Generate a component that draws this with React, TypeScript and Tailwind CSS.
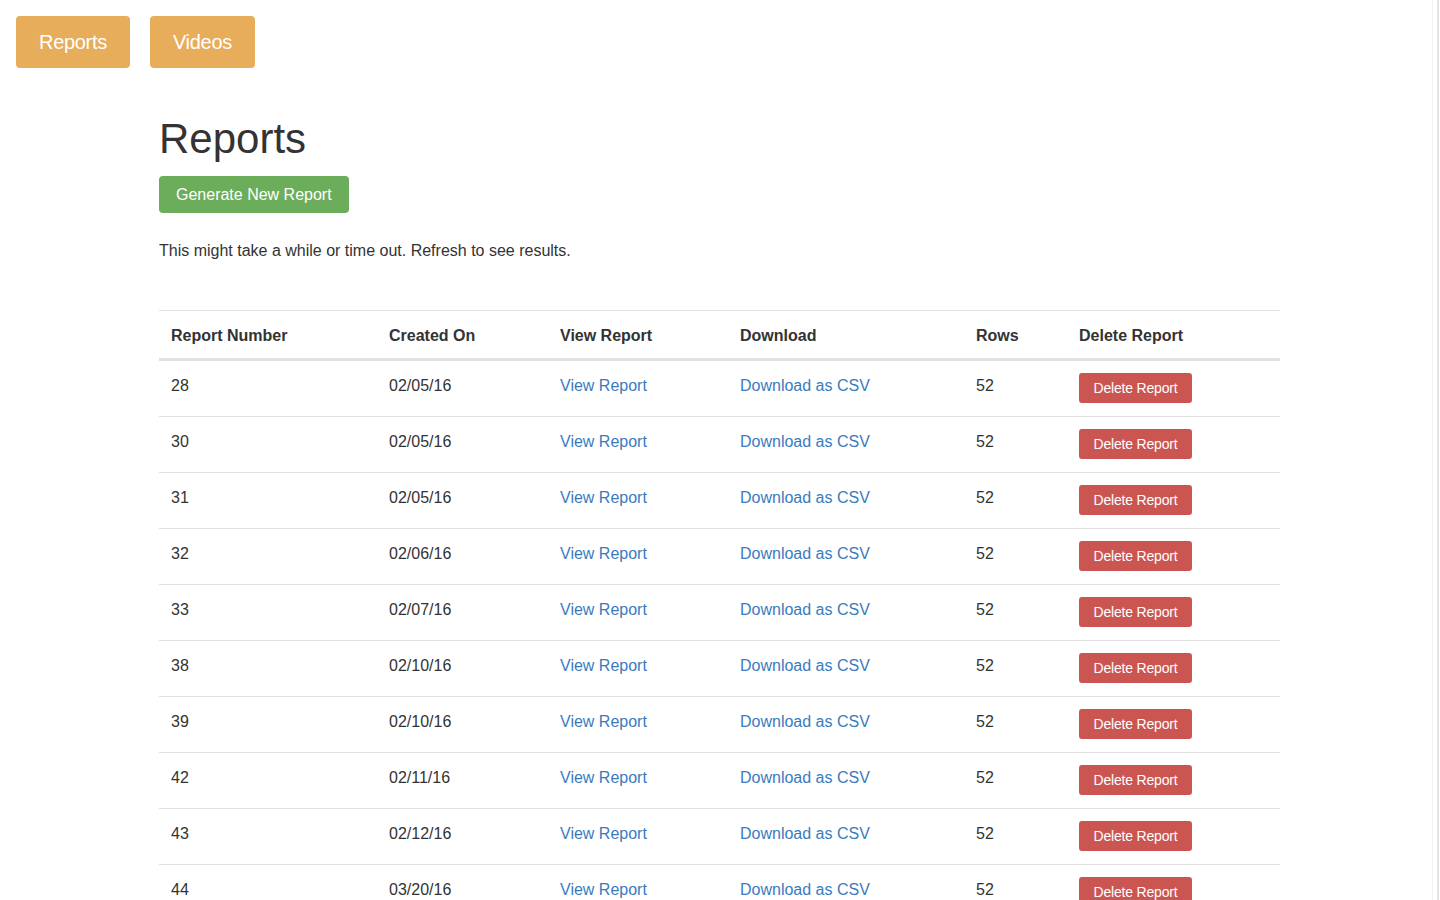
import React from "react";

type Report = {
  id: number;
  created: string;
  rows: number;
};

const reports: Report[] = [
  { id: 28, created: "02/05/16", rows: 52 },
  { id: 30, created: "02/05/16", rows: 52 },
  { id: 31, created: "02/05/16", rows: 52 },
  { id: 32, created: "02/06/16", rows: 52 },
  { id: 33, created: "02/07/16", rows: 52 },
  { id: 38, created: "02/10/16", rows: 52 },
  { id: 39, created: "02/10/16", rows: 52 },
  { id: 42, created: "02/11/16", rows: 52 },
  { id: 43, created: "02/12/16", rows: 52 },
  { id: 44, created: "03/20/16", rows: 52 },
];

const headers = [
  { label: "Report Number", w: "w-[218px]" },
  { label: "Created On", w: "w-[171px]" },
  { label: "View Report", w: "w-[180px]" },
  { label: "Download", w: "w-[236px]" },
  { label: "Rows", w: "w-[103px]" },
  { label: "Delete Report", w: "w-[213px]" },
];

function NavButton({ label }: { label: string }) {
  return (
    <button className="h-[52px] px-[23px] rounded-[4px] bg-[#e8ad5b] text-white text-[20px] leading-[24px] tracking-[-0.3px]">
      {label}
    </button>
  );
}

export default function App() {
  return (
    <div
      className="flex min-h-screen bg-white text-[#333] text-[16px]"
      style={{ fontFamily: '"Liberation Sans", Arial, sans-serif' }}
    >
      <div className="flex-1">
        <nav className="flex gap-5 px-4 pt-4">
          <NavButton label="Reports" />
          <NavButton label="Videos" />
        </nav>

        <main className="pl-[159px] pt-[48px] pb-10">
          <h1 className="text-[42px] leading-[1.1] font-normal text-[#333]">
            Reports
          </h1>
          <button className="mt-[14px] h-[37px] px-[17px] rounded-[4px] bg-[#6cad5c] text-white text-[16px] leading-5">
            Generate New Report
          </button>
          <p className="mt-[25px] leading-6 pt-px">
            This might take a while or time out. Refresh to see results.
          </p>

          <table className="mt-[47px] w-[1121px] border-separate border-spacing-0 text-left">
            <thead>
              <tr>
                {headers.map((h) => (
                  <th
                    key={h.label}
                    className={`${h.w} border-t border-b-2 border-[#e2e2e2] px-3 pt-[15px] pb-3 leading-5 font-bold`}
                  >
                    {h.label}
                  </th>
                ))}
              </tr>
            </thead>
            <tbody>
              {reports.map((r) => (
                <tr key={r.id}>
                  <td className="border-t border-[#e2e2e2] px-3 pt-[13px] pb-3 align-top leading-6">
                    {r.id}
                  </td>
                  <td className="border-t border-[#e2e2e2] px-3 pt-[13px] pb-3 align-top leading-6">
                    {r.created}
                  </td>
                  <td className="border-t border-[#e2e2e2] px-3 pt-[13px] pb-3 align-top leading-6">
                    <a href="#" className="text-[#3a7bc0]">
                      View Report
                    </a>
                  </td>
                  <td className="border-t border-[#e2e2e2] px-3 pt-[13px] pb-3 align-top leading-6">
                    <a href="#" className="text-[#3a7bc0]">
                      Download as CSV
                    </a>
                  </td>
                  <td className="border-t border-[#e2e2e2] px-3 pt-[13px] pb-3 align-top leading-6">
                    {r.rows}
                  </td>
                  <td className="border-t border-[#e2e2e2] px-3 pt-3 pb-[13px] align-top">
                    <button className="block h-[30px] w-[113px] rounded-[3px] bg-[#cb5651] text-white text-[14px] leading-5 tracking-[-0.2px]">
                      Delete Report
                    </button>
                  </td>
                </tr>
              ))}
            </tbody>
          </table>
        </main>
      </div>

      {/* scrollbar track on the right edge */}
      <div className="w-[7px] border-l border-r-2 border-l-[#f2f2f2] border-r-[#e3e3e3] bg-white" />
      <div className="w-px bg-white" />
    </div>
  );
}
